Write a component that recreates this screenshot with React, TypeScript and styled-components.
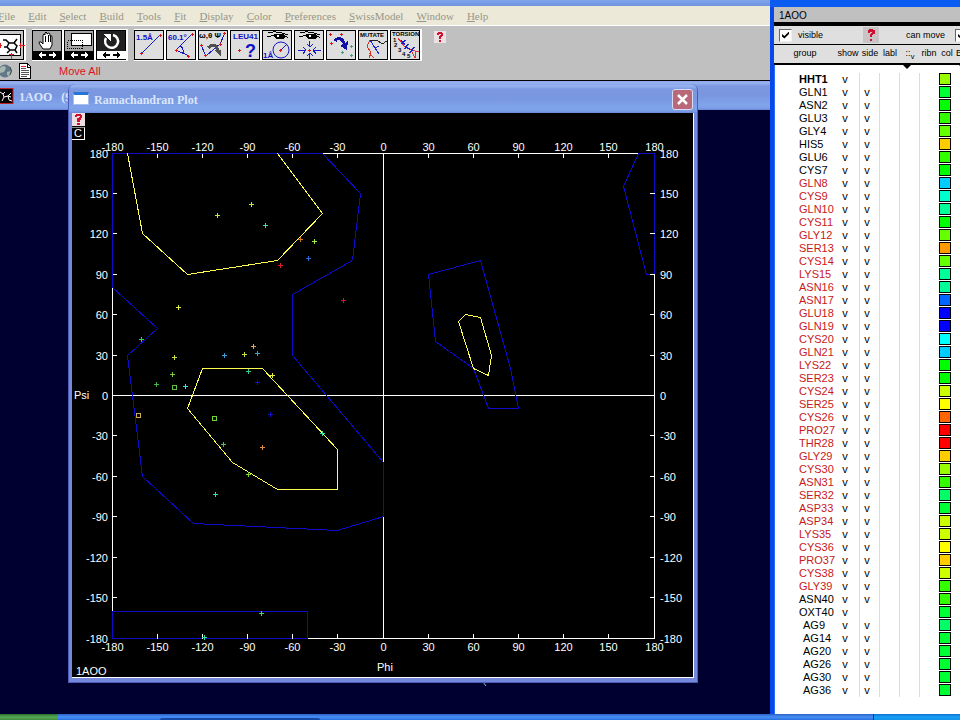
import React from 'react';
import styled, { createGlobalStyle } from 'styled-components';

const SANS = '"Liberation Sans", Arial, sans-serif';
const SERIF = '"Liberation Serif", "Times New Roman", serif';

const GlobalStyle = createGlobalStyle`
  * { box-sizing: border-box; }
  body { margin: 0; background: #000030; font-family: ${SANS}; }
  button { font: inherit; padding: 0; border: 0; cursor: pointer; }
`;

const Desktop = styled.div`
  display: grid;
  grid-template-columns: minmax(0, 1fr) 190px;
  grid-template-rows: minmax(0, 1fr) 6px;
  min-height: 100vh;
  overflow: hidden;
`;

const Viewer = styled.main`
  position: relative;
  display: flex;
  flex-direction: column;
  min-width: 0;
  background: #000030;
`;

const TopEdge = styled.div<{ $strong?: boolean }>`
  flex: none;
  height: ${(p) => (p.$strong ? 7 : 6)}px;
  background: ${(p) => (p.$strong ? '#0a5cf2' : 'linear-gradient(#7ea4ee, #7292dc)')};
`;

const MenuBar = styled.nav`
  display: flex;
  align-items: center;
  gap: 13px;
  height: 20px;
  margin-left: -2px;
  background: #ece9d8;
  border-bottom: 1px solid #fff;
`;

const MenuItem = styled.button`
  background: none;
  color: #98968a;
  font-family: ${SERIF};
  font-size: 11px;
  line-height: 16px;
  &::first-letter { text-decoration: underline; }
`;

const Toolbar = styled.div`
  display: flex;
  flex-direction: column;
  height: 55px;
  padding-top: 3px;
  background: #c0c0c0;
  border-bottom: 1px solid #000;
  overflow: hidden;
`;

const ToolRow = styled.div`
  display: flex;
  gap: 6px;
  height: 32px;
  margin-left: -4px;
`;

const ToolGroup = styled.div`
  display: flex;
  &:first-child { margin-left: -2px; }
`;

const Tool = styled.button`
  display: block;
  width: 32px;
  height: 32px;
  background: none;
  svg { display: block; }
`;

const HelpButton = styled.button<{ $size?: number }>`
  display: block;
  flex: none;
  width: ${(p) => p.$size ?? 12}px;
  height: ${(p) => p.$size ?? 12}px;
  background: #eedfe2;
  svg { display: block; width: 100%; height: 100%; }
`;

const PanelHelp = styled(HelpButton)`
  padding: 1px;
  background: #c8c4c6;
`;

const HelpSlot = styled.div`
  padding: 2px 0 0 6px;
`;

const StatusRow = styled.div`
  display: flex;
  align-items: center;
  gap: 6px;
  height: 19px;
  svg { display: block; }
`;

const StatusText = styled.span`
  margin-left: 21px;
  color: #e0101c;
  font-size: 11px;
  line-height: 14px;
`;

const TitleBar = styled.header`
  display: flex;
  align-items: center;
  gap: 5px;
  height: 29px;
  flex: none;
  background: linear-gradient(#8aa6ea 0, #98b2f0 2px, #7c98e0 5px, #7996e0 14px, #80a4ec 24px, #7c9fe8 27px, #6a86d4 29px);
  color: #dbe6fc;
  font-family: ${SERIF};
  font-size: 12px;
  font-weight: bold;
  line-height: 16px;
  white-space: pre;
`;

const TitleText = styled.span`
  flex: 1;
  padding-top: 3px;
`;

const PlotWindow = styled.section`
  position: absolute;
  left: 68px;
  right: 72px;
  top: 84px;
  padding: 0 3px 4px;
  background: #7488dc;
  border: 1px solid #4c5cb4;
  border-top: 0;
  border-radius: 7px 7px 0 0;
  ${TitleBar} {
    margin: 0 -3px;
    padding: 0 4px;
    border-radius: 6px 6px 0 0;
  }
`;

const CloseButton = styled.button`
  width: 21px;
  height: 21px;
  margin-top: 2px;
  border: 1px solid #d8dcf4;
  border-radius: 3px;
  background: #b86878;
  svg { display: block; margin: auto; }
`;

const WindowIcon = styled.span`
  width: 16px;
  height: 13px;
  background: #fff;
  border: 1px solid #a8c0f0;
  border-top: 3px solid #2874d4;
`;

const PlotArea = styled.div`
  position: relative;
  background: #000;
  border-right: 1px solid #fff;
  border-bottom: 1px solid #fff;
`;

const PlotSvg = styled.svg`
  display: block;
  width: 100%;
  height: auto;
  font-family: ${SANS};
  font-size: 11px;
  fill: #fff;
`;

const CornerButtons = styled.div`
  position: absolute;
  left: 0;
  top: 0;
  display: flex;
  flex-direction: column;
  gap: 1px;
`;

const ChainButton = styled.button`
  width: 13px;
  height: 13px;
  background: #000;
  color: #fff;
  border-right: 1px solid #fff;
  border-bottom: 1px solid #fff;
  border-top: 1px solid #888;
  font-size: 11px;
  line-height: 11px;
`;

const StrayBond = styled.svg`
  position: absolute;
  left: 482px;
  top: 681px;
`;

const Panel = styled.aside`
  display: flex;
  flex: 1;
  flex-direction: column;
  min-width: 0;
  overflow: hidden;
  background: #fff;
  border-left: 4px solid #0848e8;
  box-shadow: inset 1px 0 #2c6cff;
`;

const PanelStack = styled.div`
  display: flex;
  flex-direction: column;
  min-width: 0;
  overflow: hidden;
`;

const PanelTitle = styled.h2`
  height: 19px;
  margin: 0;
  padding-left: 5px;
  background: #c0c0c0;
  border-bottom: 4px solid #000;
  font-size: 10px;
  font-weight: normal;
  line-height: 17px;
`;

const PanelOptions = styled.div`
  display: flex;
  align-items: center;
  height: 19px;
  padding-left: 5px;
  background: #dfdfdf;
  border-bottom: 1px solid #000;
  font-size: 9px;
  line-height: 16px;
  white-space: nowrap;
`;

const Option = styled.label`
  display: flex;
  align-items: center;
  gap: 6px;
  flex: none;
  width: 84px;
`;

const EndOption = styled(Option)`
  width: auto;
  margin-left: 27px;
  gap: 10px;
`;

const Check = styled.input`
  appearance: none;
  position: relative;
  width: 13px;
  height: 13px;
  margin: 0;
  background: #fff;
  border: 1px solid #666;
  border-right-color: #eee;
  border-bottom-color: #eee;
  &:checked::before {
    content: '';
    position: absolute;
    inset: 2px;
    background: #000;
    clip-path: polygon(0 35%, 35% 65%, 100% 0, 100% 35%, 35% 100%, 0 70%);
  }
`;

const GroupTable = styled.table`
  width: 100%;
  table-layout: fixed;
  border-collapse: separate;
  border-spacing: 0;
  tbody::before {
    content: '';
    display: block;
    height: 8px;
  }
`;

const Col = styled.col<{ $w: number }>`
  width: ${(p) => p.$w}px;
`;

const Head = styled.th<{ $marker?: boolean }>`
  position: relative;
  height: 20px;
  padding: 0 0 2px;
  background: #dfdfdf;
  border-bottom: 2px solid #000;
  font-size: 9px;
  font-weight: normal;
  line-height: 16px;
  white-space: nowrap;
  vertical-align: middle;
  sub { line-height: 0; }
  ${(p) =>
    p.$marker &&
    `&::after {
      content: '';
      position: absolute;
      left: 2px;
      top: 19px;
      border: 5px solid transparent;
      border-top-color: #000;
      border-bottom: 0;
    }`}
`;

const Row = styled.tr`
  height: 13px;
`;

const NameCell = styled.th<{ $red?: boolean; $bold?: boolean; $indent?: boolean }>`
  height: 13px;
  padding: 0 0 0 ${(p) => (p.$indent ? 29 : 25)}px;
  color: ${(p) => (p.$red ? '#c81820' : '#000')};
  font-size: 11px;
  font-weight: ${(p) => (p.$bold ? 'bold' : 'normal')};
  line-height: 13px;
  text-align: left;
  white-space: nowrap;
`;

const Cell = styled.td<{ $line?: boolean }>`
  height: 13px;
  padding: 0 5px 0 0;
  border-right: ${(p) => (p.$line ? '1px solid #dcdcdc' : '0')};
  font-size: 11px;
  line-height: 13px;
  text-align: center;
`;

const ColorCell = styled.td`
  height: 13px;
  padding: 0 0 0 1px;
  vertical-align: top;
`;

const Swatch = styled.button<{ $color: string }>`
  display: block;
  width: 12px;
  height: 12px;
  background: ${(p) => p.$color};
  border: 1px solid #000;
`;

const Taskbar = styled.footer`
  grid-column: 1 / -1;
  display: grid;
  grid-template-columns: 57px 103px 160px 1fr 87px;
  background: linear-gradient(#2a62c8, #4890f4 3px, #2a6ee0);
`;

const TaskItem = styled.div<{ $kind: 'start' | 'gap' | 'active' | 'tray' }>`
  margin-top: ${(p) => (p.$kind === 'active' ? 4 : 0)}px;
  border-radius: ${(p) => (p.$kind === 'active' ? '2px 2px 0 0' : '0')};
  border-left: ${(p) => (p.$kind === 'tray' ? '1px solid #083c90' : '0')};
  background: ${(p) =>
    ({
      start: 'linear-gradient(#28702c, #58a858 3px, #3c8c3c)',
      gap: 'transparent',
      active: '#1448a8',
      tray: 'linear-gradient(#1070d0, #18a0f4 3px, #1290e8)',
    })[p.$kind]};
`;

const Question = () => (
  <svg viewBox="0 0 12 12" aria-hidden="true" shapeRendering="crispEdges">
    <path d="M4 1h4v1h1v3H8v1H7v2H5V5h1V4h1V3H5v1H3V2h1zM5 9h2v2H5z" fill="#d01030" />
  </svg>
);

/* ---------- toolbar drawings ---------- */

const Frame = ({ children, bg = '#dedede' }: { children: React.ReactNode; bg?: string }) => (
  <svg width="32" height="32" viewBox="0 0 32 32" shapeRendering="crispEdges" aria-hidden="true">
    <rect width="32" height="32" fill="#fff" />
    <rect x="0.5" y="1.5" width="29" height="29" fill={bg} stroke="#000" />
    {children}
  </svg>
);

const Dots = ({ at, color = '#d81818' }: { at: number[][]; color?: string }) => (
  <path d={at.map(([x, y]) => `M${x - 1} ${y + 0.5}h3M${x + 0.5} ${y - 1}v3`).join('')} stroke={color} fill="none" />
);

const Label = ({ x, y, text, color = '#1010c8', size = 8 }: { x: number; y: number; text: string; color?: string; size?: number }) => (
  <text x={x} y={y} fontSize={size} fontWeight="bold" fontFamily={SANS} fill={color}>{text}</text>
);

const Arrows = ({ color, bg }: { color: string; bg: string }) => (
  <>
    <rect x="1" y="22" width="29" height="8" fill={bg} />
    <path d="M6 26l4-3v2h4v2h-4v2zM25 26l-4-3v2h-4v2h4v2z" fill={color} />
  </>
);

const Eye = () => (
  <>
    <path d="M6 4q9-3 20 2M5 8q5-1 8-2 8-2 13 3" stroke="#000" fill="none" />
    <path d="M12 5h9l3 3-3 2h-6l-3-2z" fill="#000" />
    <path d="M15 6h2v2h-2z" fill="#fff" />
  </>
);

const FitIcon = () => (
  <Frame bg="#c8c8c8">
    <rect x="5.5" y="5.5" width="21" height="21" fill="#fff" stroke="#000" />
    <path
      d="M15 14h5l3 3-2 4h-5l-3-3zM15 14l-3-3H9M20 14l3-4M21 21l2 3M16 21l-3 3M13 18h-3"
      stroke="#000"
      strokeWidth="1.5"
      fill="none"
      shapeRendering="auto"
    />
    <path d="M1 16.5h7M6 14v5M31 16.5h-6M26 14v5M17.5 30v-6M15 25.5h5" stroke="#e02020" fill="none" />
  </Frame>
);

const HandIcon = () => (
  <Frame bg="#a8a8a8">
    <path d="M11 20l-4-6q0-2 2-1l2 2V6q1-2 2 0V4q1-2 2 0v1q2-2 3 0v2q2-1 2 1v8l-2 4z" fill="#fff" stroke="#000" shapeRendering="auto" />
    <path d="M13 7v6M16 6v7M18 7v6" stroke="#000" fill="none" />
    <Arrows color="#fff" bg="#000" />
  </Frame>
);

const ZoomIcon = () => (
  <Frame bg="#a8a8a8">
    <rect x="7.5" y="4.5" width="20" height="12" fill="#fff" stroke="#000" />
    <rect x="3.5" y="11.5" width="15" height="8" fill="none" stroke="#000" strokeDasharray="1 1" />
    <Arrows color="#fff" bg="#000" />
  </Frame>
);

const RotateIcon = () => (
  <Frame bg="#202020">
    <path d="M10 9a6.5 6.500 0 1 0 7-3" stroke="#fff" strokeWidth="2.5" fill="none" shapeRendering="auto" />
    <path d="M7 5h8v7z" fill="#fff" />
    <Arrows color="#000" bg="#fff" />
  </Frame>
);

const DistanceIcon = () => (
  <Frame>
    <path d="M8 24L26 6" stroke="#1818c8" />
    <Dots at={[[7, 24], [26, 6]]} />
    <Label x={2} y={11} text="1.5Å" />
  </Frame>
);

const AngleIcon = () => (
  <Frame>
    <path d="M26 5L10 21l13 6M14 17q4 2 3 7" stroke="#1818c8" fill="none" />
    <Dots at={[[26, 5], [10, 21], [22, 27]]} />
    <Label x={2} y={11} text="60.1°" />
  </Frame>
);

const DihedralIcon = () => (
  <Frame>
    <path d="M3 16l5 11 14-12 5-11" stroke="#1818c8" fill="none" />
    <path d="M10 19q7-7 10 3" stroke="#505050" strokeWidth="3" fill="none" />
    <path d="M16 21h7v6z" fill="#505050" />
    <Dots at={[[3, 16], [7, 26], [22, 15], [26, 4]]} />
    <Label x={1} y={9} text="ω,θ Ψ" color="#000" />
  </Frame>
);

const IdentifyIcon = () => (
  <Frame>
    <Label x={3} y={10} text="LEU41" />
    <Label x={15} y={28} text="?" size={18} />
    <Dots at={[[9, 21]]} />
  </Frame>
);

const RadiusIcon = () => (
  <Frame>
    <Eye />
    <circle cx="19" cy="21" r="8" fill="none" stroke="#1818c8" shapeRendering="auto" />
    <path d="M19 21l6-6" stroke="#1818c8" />
    <Dots at={[[18, 21]]} />
    <Label x={1} y={29} text="1Å" />
  </Frame>
);

const CenterIcon = () => (
  <Frame>
    <Eye />
    <path d="M4 21.5h8M9 18l3 3-3 4M27 21.5h-8M22 18l-3 3 3 4M15.5 12v6M13 15l3 3 3-3M15.5 30v-6M13 27l3-3 3 3" stroke="#1818c8" fill="none" />
    <Dots at={[[15, 21]]} />
  </Frame>
);

const MoveIcon = () => (
  <Frame>
    <path d="M9 12q5-7 10 4" stroke="#1010a8" strokeWidth="3" fill="none" />
    <path d="M14 17l8-5-1 9z" fill="#1010a8" />
    <Dots at={[[4, 5], [15, 5], [5, 14]]} />
    <Dots at={[[25, 17], [16, 23], [25, 26]]} color="#4c9880" />
  </Frame>
);

const MutateIcon = () => (
  <Frame>
    <Label x={2} y={8} text="MUTATE" color="#000" size={6} />
    <path d="M12 11l-3 6 4 7-2 5M11 24l5 5" stroke="#e03020" fill="none" />
    <path d="M12 11l5 8 4 6M17 19l4-2" stroke="#2020d8" fill="none" />
    <path d="M12 11h7l5 4 5-3" stroke="#222" fill="none" />
  </Frame>
);

const TorsionIcon = () => (
  <Frame>
    <Label x={2} y={7} text="TORSION" color="#000" size={6} />
    <path d="M8 9l6 8 7 4 4 8M21 21l8 2M25 23v6" stroke="#e03030" fill="none" />
    <path d="M11 12l4 3M15 11l-3 4M18 15l-3 5M15 18l5 2M24 18l-4 6" stroke="#2020c8" strokeWidth="1.5" fill="none" />
    <Label x={3} y={13} text="1" color="#000" size={6} />
    <Label x={4} y={18} text="2" color="#000" size={6} />
    <Label x={8} y={23} text="3" color="#000" size={6} />
    <Label x={12} y={27} text="4" color="#000" size={6} />
    <Label x={17} y={29} text="5" color="#000" size={6} />
  </Frame>
);

const toolGroups: { name: string; icon: React.ReactNode }[][] = [
  [{ name: 'Fit to window', icon: <FitIcon /> }],
  [
    { name: 'Translate', icon: <HandIcon /> },
    { name: 'Zoom', icon: <ZoomIcon /> },
    { name: 'Rotate', icon: <RotateIcon /> },
  ],
  [
    { name: 'Distance', icon: <DistanceIcon /> },
    { name: 'Angle', icon: <AngleIcon /> },
    { name: 'Dihedral', icon: <DihedralIcon /> },
    { name: 'Identify', icon: <IdentifyIcon /> },
    { name: 'Radius', icon: <RadiusIcon /> },
    { name: 'Center', icon: <CenterIcon /> },
    { name: 'Fit molecules', icon: <MoveIcon /> },
    { name: 'Mutate', icon: <MutateIcon /> },
    { name: 'Torsion', icon: <TorsionIcon /> },
  ],
];

const menus = ['File', 'Edit', 'Select', 'Build', 'Tools', 'Fit', 'Display', 'Color', 'Preferences', 'SwissModel', 'Window', 'Help'];

/* ---------- plot ---------- */

const X0 = 40.5;
const Y0 = 40.5;
const W = 542;
const H = 485;
const px = (phi: number) => Math.floor(((phi + 180) / 360) * W) + X0;
const py = (psi: number) => Math.floor(((180 - psi) / 360) * H) + Y0;
const poly = (pts: number[][]) => pts.map(([a, b]) => `${px(a)},${py(b)}`).join(' ');

const allowed = [
  [[-180, 180], [-40, 180], [-15, 150], [-20, 100], [-60, 75], [-60, 30], [0, -50], [0, -90], [-30, -100], [-126, -95], [-160, -60], [-170, 30], [-150, 50], [-180, 80]],
  [[180, 180], [170, 180], [160, 155], [175, 90], [180, 90]],
  [[30, 90], [65, 100], [85, 20], [90, -10], [70, -10], [60, 20], [35, 40]],
  [[-180, -160], [-50, -160], [-50, -180], [-180, -180]],
];
const favored = [
  [[-170, 180], [-160, 120], [-130, 90], [-70, 100], [-40, 135], [-70, 180]],
  [[-120, 20], [-80, 20], [-30, -40], [-30, -70], [-70, -70], [-100, -50], [-130, -10], [-120, 20]],
  [[50, 55], [55, 60], [65, 58], [72, 30], [70, 15], [60, 20], [50, 55]],
];
const ticks = [-180, -150, -120, -90, -60, -30, 0, 30, 60, 90, 120, 150, 180];

const residues: [number, number, string][] = [
  [145, 102, '#b8f040'], [179, 91, '#b8f040'], [193, 112, '#3ce0a0'], [228, 126, '#d07820'],
  [242, 128, '#a0f040'], [236, 145, '#2c6ed0'], [208, 152, '#e02020'], [271, 187, '#d81828'],
  [106, 194, '#e8f040'], [69, 226, '#30d050'], [102, 244, '#d0e040'], [100, 261, '#78d040'],
  [84, 271, '#40b840'], [113, 273, '#40e0e0'], [152, 242, '#3a9ad8'], [172, 241, '#c8e040'],
  [181, 233, '#e0a850'], [185, 240, '#3aa8e0'], [176, 258, '#30c890'], [200, 262, '#e8f040'],
  [185, 269, '#1010c8'], [198, 301, '#1010c8'], [250, 320, '#40e0a0'], [151, 331, '#40c850'],
  [190, 334, '#e08840'], [176, 361, '#80d830'], [143, 381, '#30e0a0'], [189, 500, '#40e050'],
  [132, 524, '#30e0a0'],
];
const glycines: [number, number, string][] = [
  [102, 274, '#60c040'], [66, 302, '#d0b040'], [142, 305, '#70d830'],
];

const Plot = () => (
  <PlotSvg viewBox="0 0 621 564" role="img" aria-label="Ramachandran plot of 1AOO">
    <g shapeRendering="crispEdges" fill="none">
      <rect x={X0} y={Y0} width={W} height={H} stroke="#fff" />
      <path d={`M${px(0)} ${Y0}v${H}M${X0} ${py(0)}h${W}`} stroke="#fff" />
      {allowed.map((p, i) => <polygon key={i} points={poly(p)} stroke="#0c0cc8" />)}
      {favored.map((p, i) => <polyline key={i} points={poly(p)} stroke="#ffff50" />)}
      {ticks.slice(1, -1).map((t) => (
        <path
          key={t}
          d={`M${px(t)} ${Y0}v4M${px(t)} ${Y0 + H}v-5M${X0} ${py(t)}h4M${X0 + W} ${py(t)}h-5`}
          stroke="#fff"
        />
      ))}
      {residues.map(([x, y, c]) => (
        <path key={`${x}-${y}`} d={`M${x - 2} ${y + 0.5}h5M${x + 0.5} ${y - 2}v5`} stroke={c} />
      ))}
      {glycines.map(([x, y, c]) => (
        <rect key={`${x}-${y}`} x={x - 1.5} y={y - 1.5} width="4" height="4" stroke={c} />
      ))}
    </g>
    {ticks.map((t) => (
      <g key={t}>
        <text x={px(t)} y={38} textAnchor="middle">{t}</text>
        <text x={px(t)} y={538} textAnchor="middle">{t}</text>
        <text x={36} y={py(t) + 4} textAnchor="end">{t}</text>
        <text x={588} y={py(t) + 4}>{t}</text>
      </g>
    ))}
    <text x={2} y={286}>Psi</text>
    <text x={305} y={558}>Phi</text>
    <text x={4} y={562}>1AOO</text>
  </PlotSvg>
);

/* ---------- residue list ---------- */

const groups: [string, string][] = [
  ['HHT1', '#99ff00'], ['GLN1', '#00ff33'], ['ASN2', '#00ff00'], ['GLU3', '#33ff00'], ['GLY4', '#66ff00'],
  ['HIS5', '#ffcc00'], ['GLU6', '#33ff00'], ['CYS7', '#00ff00'], ['GLN8', '#00ccff'], ['CYS9', '#00ffcc'],
  ['GLN10', '#00ff99'], ['CYS11', '#00ff00'], ['GLY12', '#66ff00'], ['SER13', '#ff9900'], ['CYS14', '#66ff00'],
  ['LYS15', '#00ff99'], ['ASN16', '#00ff99'], ['ASN17', '#0066ff'], ['GLU18', '#0000ff'], ['GLN19', '#0000ff'],
  ['CYS20', '#00ffff'], ['GLN21', '#00ccff'], ['LYS22', '#00ff00'], ['SER23', '#00ff00'], ['CYS24', '#ccff00'],
  ['SER25', '#ffff00'], ['CYS26', '#ff6600'], ['PRO27', '#ff0000'], ['THR28', '#ff0000'], ['GLY29', '#ffcc00'],
  ['CYS30', '#99ff00'], ['ASN31', '#33ff00'], ['SER32', '#00ff66'], ['ASP33', '#00ff33'], ['ASP34', '#ccff00'],
  ['LYS35', '#ccff00'], ['CYS36', '#ffff00'], ['PRO37', '#ffcc00'], ['CYS38', '#ccff00'], ['GLY39', '#33ff00'],
  ['ASN40', '#33ff00'], ['OXT40', '#00ff33'], ['AG9', '#00ff66'], ['AG14', '#00ff33'], ['AG20', '#00ff33'],
  ['AG26', '#00ff33'], ['AG30', '#00ff33'], ['AG36', '#00ff33'],
];

const ControlPanel = () => (
  <Panel>
    <PanelTitle>1AOO</PanelTitle>
    <PanelOptions>
      <Option>
        <Check type="checkbox" defaultChecked />
        visible
      </Option>
      <PanelHelp $size={16} aria-label="Panel help"><Question /></PanelHelp>
      <EndOption>
        can move
        <Check type="checkbox" defaultChecked />
      </EndOption>
    </PanelOptions>
    <GroupTable>
      <colgroup>
        {[62, 24, 20, 20, 20, 18, 18, 4].map((w, i) => <Col key={i} $w={w} />)}
      </colgroup>
      <thead>
        <tr>
          <Head>group</Head>
          <Head>show</Head>
          <Head>side</Head>
          <Head>labl</Head>
          <Head $marker>::<sub>v</sub></Head>
          <Head>ribn</Head>
          <Head>col</Head>
          <Head $marker>B</Head>
        </tr>
      </thead>
      <tbody>
        {groups.map(([name, color], i) => (
          <Row key={name}>
            <NameCell scope="row" $bold={i === 0} $red={i >= 8 && i <= 39} $indent={name.startsWith('AG')}>
              {name}
            </NameCell>
            <Cell $line>v</Cell>
            <Cell $line>{name === 'HHT1' || name === 'OXT40' ? '' : 'v'}</Cell>
            <Cell $line />
            <Cell $line />
            <Cell />
            <ColorCell><Swatch $color={color} aria-label={`${name} color`} /></ColorCell>
            <Cell />
          </Row>
        ))}
      </tbody>
    </GroupTable>
  </Panel>
);

export default function App() {
  return (
    <>
      <GlobalStyle />
      <Desktop>
        <Viewer>
          <TopEdge />
          <MenuBar>
            {menus.map((m) => <MenuItem key={m}>{m}</MenuItem>)}
          </MenuBar>
          <Toolbar>
            <ToolRow>
              {toolGroups.map((g, i) => (
                <ToolGroup key={i}>
                  {g.map((t) => <Tool key={t.name} aria-label={t.name}>{t.icon}</Tool>)}
                </ToolGroup>
              ))}
              <HelpSlot>
                <HelpButton aria-label="Toolbar help"><Question /></HelpButton>
              </HelpSlot>
            </ToolRow>
            <StatusRow>
              <svg width="12" height="14" viewBox="0 0 12 14" aria-hidden="true">
                <circle cx="5" cy="7" r="6.5" fill="#607888" />
                <path d="M0 4q4-4 6 0l-2 4-4 1zM7 8l4-1-2 5-2-1z" fill="#a8b8b0" />
                <path d="M10 3q3 4 0 8" stroke="#404848" fill="none" />
              </svg>
              <svg width="14" height="16" viewBox="0 0 14 16" shapeRendering="crispEdges" aria-hidden="true">
                <path d="M1.5 .5h8l3 3v12h-11z" fill="#fff" stroke="#000" />
                <path d="M9.5 1v3h3" stroke="#000" fill="none" />
                <path d="M3 3.5h5" stroke="#e02020" />
                <path d="M3 5.5h5M3 7.5h8M3 9.5h8M3 11.5h8M3 13.5h6" stroke="#555" />
              </svg>
              <StatusText>Move All</StatusText>
            </StatusRow>
          </Toolbar>
          <TitleBar>
            <svg width="14" height="16" viewBox="0 0 14 16" aria-hidden="true">
              <rect x="-2" y=".5" width="15" height="15" fill="#000" stroke="#c02020" />
              <path d="M0 4l3 2M3 6l2-2M3 6l1 3 4-1 3-3M4 9l-2 4M8 8l1 4 3 1M8 8l3 1" stroke="#fff" fill="none" />
            </svg>
            <TitleText>1AOO   (9</TitleText>
          </TitleBar>
          <StrayBond width="5" height="6" viewBox="0 0 5 6" aria-hidden="true">
            <path d="M1 1l3 4" stroke="#70c0c8" />
          </StrayBond>
          <PlotWindow>
            <TitleBar>
              <WindowIcon />
              <TitleText>Ramachandran Plot</TitleText>
              <CloseButton aria-label="Close">
                <svg width="13" height="13" viewBox="0 0 13 13">
                  <path d="M2 2l9 9M11 2l-9 9" stroke="#fff" strokeWidth="2.5" />
                </svg>
              </CloseButton>
            </TitleBar>
            <PlotArea>
              <Plot />
              <CornerButtons>
                <HelpButton $size={13} aria-label="Plot help"><Question /></HelpButton>
                <ChainButton>C</ChainButton>
              </CornerButtons>
            </PlotArea>
          </PlotWindow>
        </Viewer>
        <PanelStack>
          <TopEdge $strong />
          <ControlPanel />
        </PanelStack>
        <Taskbar>
          <TaskItem $kind="start" />
          <TaskItem $kind="gap" />
          <TaskItem $kind="active" />
          <TaskItem $kind="gap" />
          <TaskItem $kind="tray" />
        </Taskbar>
      </Desktop>
    </>
  );
}
